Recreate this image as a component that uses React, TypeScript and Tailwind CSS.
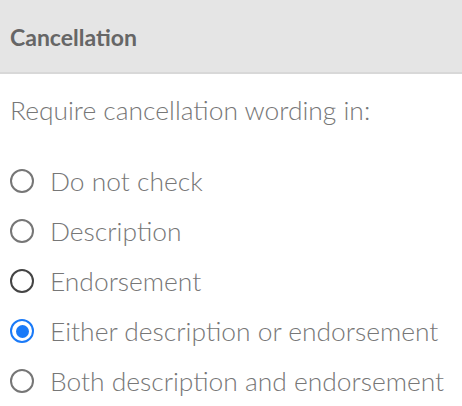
import React from "react";

const options = [
  { label: "Do not check", checked: false, dark: false },
  { label: "Description", checked: false, dark: false },
  { label: "Endorsement", checked: false, dark: true },
  { label: "Either description or endorsement", checked: true, dark: false },
  { label: "Both description and endorsement", checked: false, dark: false },
];

function Radio({ checked, dark }: { checked: boolean; dark: boolean }) {
  if (checked) {
    return (
      <span className="flex h-[24px] w-[24px] shrink-0 items-center justify-center rounded-full border-[2.5px] border-[#1a7af8]">
        <span className="h-[13px] w-[13px] rounded-full bg-[#1a7af8]" />
      </span>
    );
  }
  return (
    <span
      className={
        "h-[24px] w-[24px] shrink-0 rounded-full border-2 " +
        (dark ? "border-[#444444]" : "border-[#767676]")
      }
    />
  );
}

export default function App() {
  return (
    <div
      className="w-[462px] h-[406px] bg-white overflow-hidden"
      style={{ fontFamily: "Lato, 'Open Sans', sans-serif" }}
    >
      <div className="h-[74px] bg-[#e5e5e5] border-b-2 border-[#d8d8d8] flex items-center px-[10px]">
        <span className="text-[23px] font-bold text-[#666666] mt-[2px]">Cancellation</span>
      </div>
      <div className="px-[10px] pt-[19px] text-[#777777]">
        <div className="text-[26.4px] font-light leading-[34px]">Require cancellation wording in:</div>
        <div className="mt-[37px] flex flex-col gap-[16px]">
          {options.map((o) => (
            <label key={o.label} className="flex items-center gap-[16px] h-[34px]">
              <Radio checked={o.checked} dark={o.dark} />
              <span className="text-[26.4px] font-light leading-[34px] whitespace-nowrap">{o.label}</span>
            </label>
          ))}
        </div>
      </div>
    </div>
  );
}
